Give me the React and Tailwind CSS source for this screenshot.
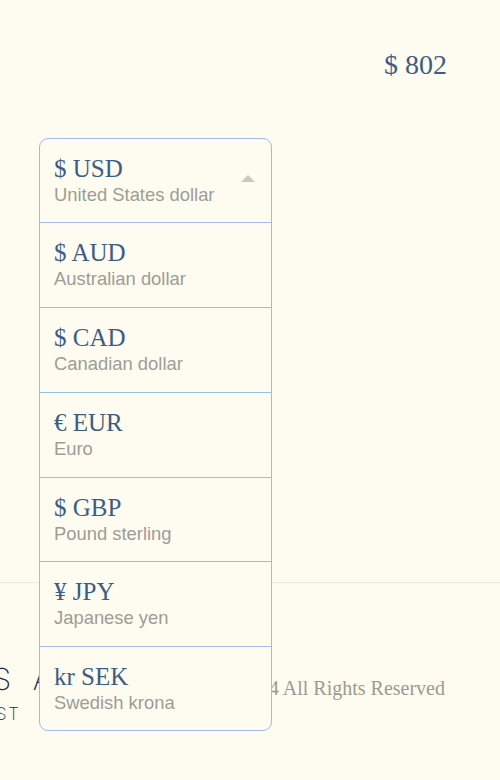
import React from "react";

const currencies = [
  { symbol: "$", code: "USD", name: "United States dollar", pb: "pb-[15px]" },
  { symbol: "$", code: "AUD", name: "Australian dollar", pb: "pb-4" },
  { symbol: "$", code: "CAD", name: "Canadian dollar", pb: "pb-4" },
  { symbol: "€", code: "EUR", name: "Euro", pb: "pb-4" },
  { symbol: "$", code: "GBP", name: "Pound sterling", pb: "pb-[15px]" },
  { symbol: "¥", code: "JPY", name: "Japanese yen", pb: "pb-4" },
  { symbol: "kr", code: "SEK", name: "Swedish krona", pb: "pb-[15px]" },
];

const serif = { fontFamily: '"Liberation Serif", "Times New Roman", serif' };

const CurrencyMenu = () => {
  return (
    <div className="absolute left-[39px] top-[138px] w-[233px] rounded-[9px] border border-[#9cbde9] bg-[#fefcf0] overflow-hidden">
      {currencies.map((c, i) => (
        <div
          key={c.code}
          className={
            "relative px-[14px] pt-4 " +
            c.pb +
            (i < currencies.length - 1 ? " border-b border-[#9cbde9]" : "")
          }
        >
          <div
            className="text-[25px] leading-[28px] text-[#3d5c87]"
            style={serif}
          >
            {c.symbol} {c.code}
          </div>
          <div className="font-['Liberation_Sans',Arial,sans-serif] text-[18.4px] leading-[24px] text-[#9d9d95]">
            {c.name}
          </div>
          {i === 0 && (
            <div className="absolute right-[16px] top-[36px] h-0 w-0 border-x-[7px] border-b-[7px] border-x-transparent border-b-[#cacac1]" />
          )}
        </div>
      ))}
    </div>
  );
};

export default function App() {
  return (
    <div className="relative min-h-[780px] w-full overflow-hidden bg-[#fefcf0]">
      <div className="h-[582px] flex justify-end pt-[49px] pr-[53px]">
        <div className="text-[28px] leading-[32px] text-[#3d5c87]" style={serif}>
          $ 802
        </div>
      </div>
      <div className="h-[198px] border-t border-[#ebe9df] flex items-start justify-between pt-[80px] pr-[55px]">
        <div className="-ml-[82px] whitespace-nowrap font-['Inter',sans-serif] font-extralight text-[#1f2a4a]">
          <div className="flex gap-[8px] text-[30px] leading-[32px]">
            <span className="tracking-[0.45em]">IRIS</span>
            <span className="tracking-[0.45em]">ATLAS</span>
          </div>
          <div className="ml-[37px] mt-[8px] text-[17px] leading-[22px] tracking-[0.1em]">COAST</div>
        </div>
        <div
          className="whitespace-nowrap text-[20px] leading-[24px] text-[#9b9a90] pt-[13px]"
          style={serif}
        >
          © 2024 All Rights Reserved
        </div>
      </div>
      <CurrencyMenu />
    </div>
  );
}
